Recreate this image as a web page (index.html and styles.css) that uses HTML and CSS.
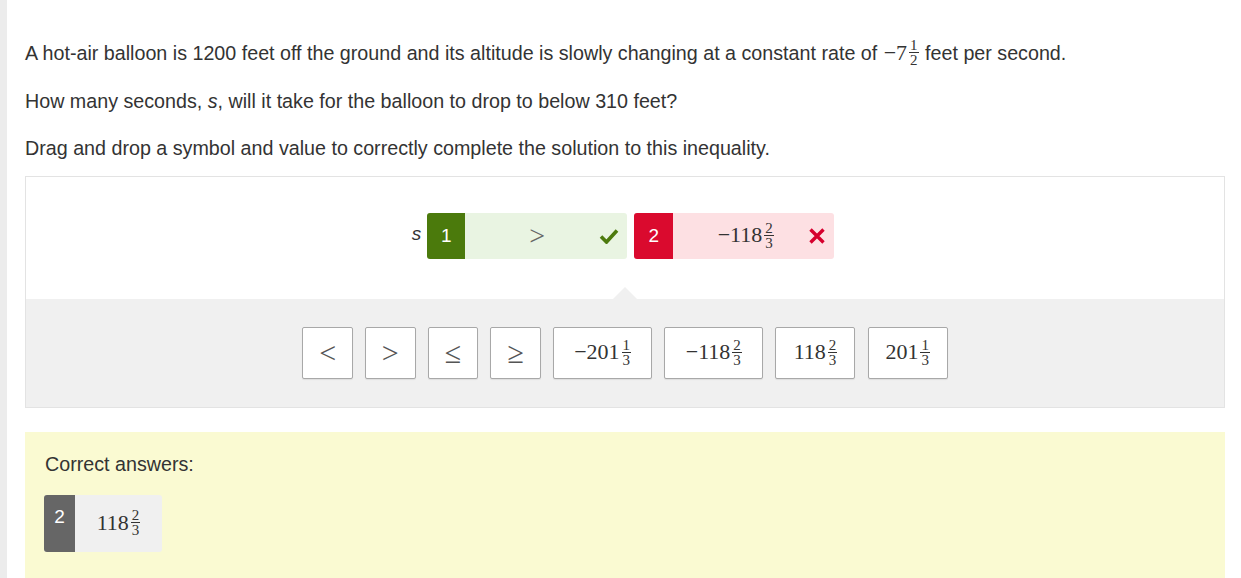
FILE: index.html
```html
<!DOCTYPE html>
<html>
<head>
<meta charset="utf-8">
<link rel="stylesheet" href="styles.css">
</head>
<body>
<div class="page">
  <div class="strip"></div>
  <main class="main">
    <p class="para">A hot-air balloon is 1200 feet off the ground and its altitude is slowly changing at a constant rate of <span class="math">−7<span class="frac"><span class="num">1</span><span class="den">2</span></span></span> feet per second.</p>
    <p class="para">How many seconds, <i>s</i>, will it take for the balloon to drop to below 310 feet?</p>
    <p class="para">Drag and drop a symbol and value to correctly complete the solution to this inequality.</p>

    <section class="question">
      <div class="response">
        <div class="row">
          <em class="var">s</em>
          <div class="drop correct">
            <span class="tag">1</span>
            <span class="val"><span class="math">&gt;</span></span>
            <svg class="mark" width="20" height="16" viewBox="0 0 20 16"><path d="M2 8.5 L7.5 14 L18 2.5" fill="none" stroke="#4d7a0e" stroke-width="3.6" stroke-linejoin="miter"/></svg>
          </div>
          <div class="drop wrong">
            <span class="tag">2</span>
            <span class="val"><span class="math">−118<span class="frac"><span class="num">2</span><span class="den">3</span></span></span></span>
            <svg class="mark" width="18" height="18" viewBox="0 0 18 18"><path d="M2.5 2.5 L15.5 15.5 M15.5 2.5 L2.5 15.5" fill="none" stroke="#d6002e" stroke-width="3.4"/></svg>
          </div>
        </div>
      </div>
      <div class="tray">
        <div class="notch"></div>
        <button class="choice sym"><span class="math">&lt;</span></button>
        <button class="choice sym"><span class="math">&gt;</span></button>
        <button class="choice sym"><span class="math">≤</span></button>
        <button class="choice sym"><span class="math">≥</span></button>
        <button class="choice w99"><span class="math">−201<span class="frac"><span class="num">1</span><span class="den">3</span></span></span></button>
        <button class="choice w99"><span class="math">−118<span class="frac"><span class="num">2</span><span class="den">3</span></span></span></button>
        <button class="choice w80"><span class="math">118<span class="frac"><span class="num">2</span><span class="den">3</span></span></span></button>
        <button class="choice w80"><span class="math">201<span class="frac"><span class="num">1</span><span class="den">3</span></span></span></button>
      </div>
    </section>

    <section class="answers">
      <p class="answers-title">Correct answers:</p>
      <div class="answer">
        <span class="atag">2</span>
        <span class="aval"><span class="math">118<span class="frac"><span class="num">2</span><span class="den">3</span></span></span></span>
      </div>
    </section>
  </main>
</div>
</body>
</html>
```

FILE: styles.css
```css
html, body {
  margin: 0;
  padding: 0;
  background: #fff;
}
body {
  font-family: "Liberation Sans", Arial, sans-serif;
  color: #333;
  overflow: hidden;
}
.page {
  display: flex;
  min-height: 578px;
}
.strip {
  width: 7px;
  flex: none;
  background: #ececec;
}
.main {
  flex: 1;
  padding: 38px 16px 0 18px;
}
.para {
  margin: 0 0 18px 0;
  font-size: 19.7px;
  line-height: 30px;
}
.para:nth-child(2) {
  margin-bottom: 17px;
}
.para:nth-child(3) {
  margin-bottom: 13px;
}
.math {
  font-family: "Liberation Serif", "Times New Roman", serif;
  font-size: 22px;
  white-space: nowrap;
}
.para .math {
  font-size: 22px;
  margin: 0 1px;
}
.frac {
  display: inline-flex;
  flex-direction: column;
  align-items: center;
  vertical-align: middle;
  font-size: 15px;
  line-height: 12px;
  margin-left: 2px;
  position: relative;
  top: -2px;
}
.frac .num {
  border-bottom: 1px solid currentColor;
  padding: 0 1px 1px;
}
.frac .den {
  padding-top: 1px;
}

.question {
  border: 1px solid #e3e3e3;
}
.response {
  background: #fff;
  height: 122px;
  box-sizing: border-box;
  padding-top: 36px;
  display: flex;
  align-items: flex-start;
  justify-content: center;
}
.row {
  display: flex;
  align-items: center;
  margin-left: -4px;
}
.var {
  font-style: italic;
  font-family: "Liberation Sans", Arial, sans-serif;
  font-size: 19px;
  margin-right: 6px;
  position: relative;
  top: -2px;
}
.drop {
  display: flex;
  align-items: center;
  height: 46px;
  border-radius: 3px;
  overflow: hidden;
}
.drop + .drop {
  margin-left: 7px;
}
.tag {
  width: 38px;
  height: 46px;
  display: flex;
  align-items: center;
  justify-content: center;
  color: #fff;
  font-size: 19px;
}
.correct {
  background: #e9f4e2;
  width: 200px;
}
.correct .tag { background: #4b7a0c; }
.correct .val {
  flex: 1;
  text-align: center;
  color: #666;
  padding-left: 10px;
}
.correct .val .math { font-size: 28px; }
.correct .mark { margin-right: 8px; }
.wrong {
  background: #fde0e3;
  width: 200px;
}
.wrong .tag { background: #da0a2e; width: 39px; }
.wrong .val {
  flex: 1;
  text-align: center;
  color: #333;
  padding-left: 10px;
}
.wrong .mark { margin-right: 8px; }

.tray {
  position: relative;
  background: #f0f0f0;
  height: 108px;
  display: flex;
  align-items: center;
  justify-content: center;
  gap: 12.2px;
}
.notch {
  position: absolute;
  top: -12px;
  left: 587px;
  width: 0;
  height: 0;
  border-left: 12px solid transparent;
  border-right: 12px solid transparent;
  border-bottom: 12px solid #f0f0f0;
}
.choice {
  height: 52px;
  background: #fff;
  border: 1px solid #a8a8a8;
  border-radius: 2px;
  padding: 0;
  margin: 0;
  color: #333;
  display: flex;
  align-items: center;
  justify-content: center;
  box-shadow: 0 1px 1px rgba(0,0,0,0.08);
}
.choice.sym { width: 50.5px; }
.choice.sym .math { color: #555; font-size: 30px; line-height: 1; }
.choice.w99 { width: 99px; }
.choice.w80 { width: 80px; }

.answers {
  margin-top: 24px;
  background: #fafad2;
  padding: 17px 20px 24px 20px;
  min-height: 110px;
}
.answers-title {
  margin: 0 0 16px 0;
  font-size: 19.7px;
  line-height: 30px;
}
.answer {
  display: inline-flex;
  height: 57px;
  border-radius: 3px;
  overflow: hidden;
  background: #f0f0f0;
  margin-left: -1px;
}
.atag {
  width: 31px;
  background: #666;
  color: #fff;
  font-size: 19px;
  display: flex;
  justify-content: center;
  padding-top: 11px;
  box-sizing: border-box;
}
.aval {
  width: 87px;
  display: flex;
  align-items: center;
  justify-content: center;
  color: #333;
}
```
